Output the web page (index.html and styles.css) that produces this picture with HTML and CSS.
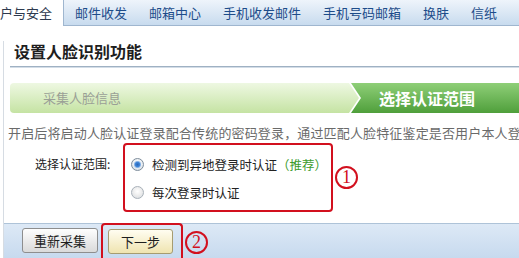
FILE: index.html
```html
<!DOCTYPE html>
<html lang="zh-CN">
<head>
<meta charset="utf-8">
<title>设置人脸识别功能</title>
<link rel="stylesheet" href="styles.css">
</head>
<body>
<div class="page">
  <nav class="tabs">
    <span class="tab active">户与安全</span>
    <span class="tab">邮件收发</span>
    <span class="tab">邮箱中心</span>
    <span class="tab">手机收发邮件</span>
    <span class="tab">手机号码邮箱</span>
    <span class="tab">换肤</span>
    <span class="tab">信纸</span>
  </nav>
  <div class="panel">
    <h1 class="title">设置人脸识别功能</h1>
    <div class="rule"></div>
    <div class="steps">
      <div class="step done">采集人脸信息</div>
      <div class="step current">选择认证范围</div>
    </div>
    <p class="desc">开启后将启动人脸认证登录配合传统的密码登录，通过匹配人脸特征鉴定是否用户本人登</p>
    <div class="form-row">
      <span class="label">选择认证范围:</span>
      <div class="options mark">
        <label class="option"><input type="radio" name="scope" class="radio" checked><span>检测到异地登录时认证<em class="rec">（推荐）</em></span></label>
        <label class="option"><input type="radio" name="scope" class="radio"><span>每次登录时认证</span></label>
      </div>
      <span class="num num-1">1</span>
    </div>
    <div class="actions">
      <button class="btn btn-gray" type="button">重新采集</button>
      <div class="mark mark-btn">
        <button class="btn btn-yellow" type="button">下一步</button>
      </div>
      <span class="num num-2">2</span>
    </div>
  </div>
</div>
</body>
</html>
```

FILE: styles.css
```css
html, body {
  margin: 0;
  padding: 0;
  background: #fff;
}
body {
  width: 519px;
  height: 258px;
  overflow: hidden;
  font-family: "Noto Sans CJK SC", "Microsoft YaHei", sans-serif;
}
.page {
  width: 519px;
  height: 258px;
  overflow: hidden;
}

/* tabs */
.tabs {
  display: flex;
  align-items: flex-start;
  height: 25px;
  margin-left: -11px;
  background: linear-gradient(#eef4fb, #c8dbee);
  border-bottom: 1px solid #9fb6cf;
}
.tab {
  flex: none;
  padding: 0 11px;
  height: 25px;
  line-height: 25px;
  font-size: 13px;
  color: #1d4c8a;
  white-space: nowrap;
}
.tab.active {
  background: #fff;
  color: #2e3a4e;
  height: 26px;
  margin-bottom: -1px;
  border-right: 1px solid #9fb6cf;
}

/* panel */
.panel {
  margin-left: 3px;
  border-left: 1px solid #d6dce3;
  height: 232px;
}
.title {
  margin: 15px 0 0 10px;
  font-size: 16px;
  line-height: 20px;
  font-weight: bold;
  color: #1e1e1e;
}
.rule {
  margin: 5px 0 0 6px;
  height: 2px;
  background: linear-gradient(#9fb1c3 0 1px, #d3dde7 1px);
}

/* steps */
.steps {
  display: flex;
  margin: 15px 0 0 6px;
  height: 30px;
}
.step {
  height: 30px;
  line-height: 30px;
  white-space: nowrap;
}
.step.done {
  width: 349px;
  flex: none;
  padding-left: 33px;
  box-sizing: border-box;
  border-radius: 4px 0 0 4px;
  font-size: 13px;
  color: #9a9f96;
  background: linear-gradient(#eef8e2, #c5e3a3);
  clip-path: polygon(0 0, 339px 0, 349px 50%, 339px 100%, 0 100%);
}
.step.current {
  flex: 1;
  margin-left: -8px;
  padding-left: 28px;
  font-size: 16px;
  font-weight: bold;
  color: #fff;
  background: linear-gradient(#8fcf78, #4f9f3b);
  clip-path: polygon(0 0, 100% 0, 100% 100%, 0 100%, 10px 50%);
}

/* description */
.desc {
  margin: 11px 0 0 4px;
  font-size: 13px;
  line-height: 18px;
  letter-spacing: 0.15px;
  color: #6a6a6a;
  white-space: nowrap;
  overflow: hidden;
}

/* form */
.form-row {
  display: flex;
  align-items: center;
  margin-top: 1px;
}
.label {
  align-self: flex-start;
  margin: 7px 0 0 31px;
  width: 88px;
  line-height: 28px;
  font-size: 12px;
  color: #222;
  white-space: nowrap;
}
.mark {
  border: 2px solid #d2101e;
  border-radius: 4px;
  box-sizing: border-box;
}
.options {
  width: 210px;
  height: 69px;
  padding: 5px 0 0 6px;
}
.option {
  display: flex;
  align-items: center;
  height: 28px;
  font-size: 12.5px;
  color: #222;
  white-space: nowrap;
}
.rec {
  font-style: normal;
  color: #3c9b2c;
}
.radio {
  appearance: none;
  -webkit-appearance: none;
  margin: 0 8px 0 0;
  width: 13px;
  height: 13px;
  border-radius: 50%;
  border: 1px solid #a9b1b9;
  background: radial-gradient(circle at 50% 40%, #ffffff 0, #f0f0f0 40%, #d4d8dc 100%);
  box-sizing: border-box;
  flex: none;
}
.radio:checked {
  border-color: #7e8d9c;
  background:
    radial-gradient(circle at 50% 50%, #2a68b8 0, #3f84d6 2.2px, rgba(120,170,230,0.6) 3.4px, transparent 4px),
    radial-gradient(circle at 50% 40%, #ffffff 0, #eef2f5 45%, #c8d2dc 100%);
}
.num {
  flex: none;
  width: 23px;
  height: 23px;
  box-sizing: border-box;
  border: 2px solid #d2101e;
  border-radius: 50%;
  color: #d2101e;
  font-family: "Liberation Serif", serif;
  font-size: 18px;
  line-height: 19px;
  text-align: center;
}
.num-1 {
  margin-left: 2px;
}

/* actions bar */
.actions {
  display: flex;
  align-items: flex-start;
  margin-top: 11px;
  height: 40px;
  border-top: 1px solid #aec3d8;
  background: linear-gradient(#dde9f6, #c3d7ed);
  padding-left: 18px;
}
.btn {
  margin: 4px 0 0 0;
  height: 25px;
  padding: 0;
  font-family: "Noto Sans CJK SC", sans-serif;
  font-size: 13px;
  color: #1e1e1e;
  border-radius: 3px;
  box-sizing: border-box;
  cursor: pointer;
}
.btn-gray {
  width: 76px;
  border: 1px solid #8e8e8e;
  background: linear-gradient(#fefefe, #dadada);
}
.btn-yellow {
  width: 65px;
  margin: 0;
  border: 1px solid #a69c70;
  background: linear-gradient(#fffdf1, #efe4b0);
}
.mark-btn {
  margin: -1px 0 0 3px;
  height: 45px;
  width: 82px;
  padding: 3px 0 0 5px;
  border-bottom: none;
  border-radius: 4px 4px 0 0;
}
.num-2 {
  margin: 7px 0 0 2px;
}
```
